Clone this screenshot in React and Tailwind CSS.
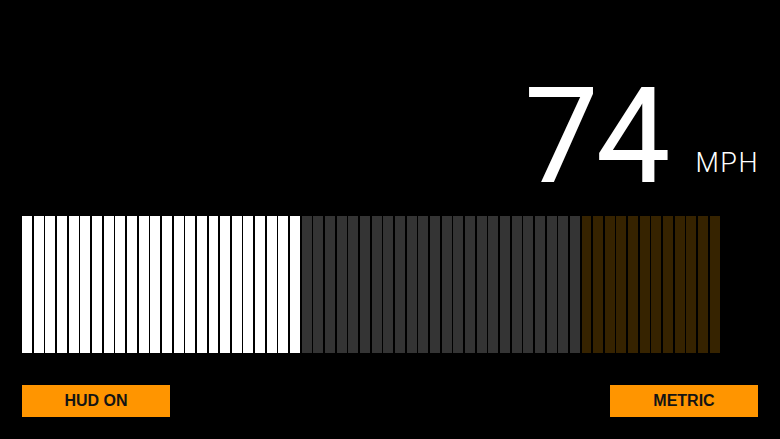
export default function App() {
  const bars = [];
  for (let i = 0; i < 60; i++) {
    let cls = "bg-white";
    if (i >= 24 && i < 48) cls = "bg-[#343434]";
    if (i >= 48) cls = "bg-[#362300]";
    bars.push(<div key={i} className={`flex-1 h-full ${cls}`} />);
  }
  return (
    <div className="w-[780px] h-[439px] bg-black flex flex-col px-[22px] overflow-hidden" style={{ fontFamily: "Roboto, 'Liberation Sans', sans-serif" }}>
      <div className="flex justify-end items-end pt-[70px]">
        <div className="text-white font-normal text-[133px] leading-none tracking-[-3px]">74</div>
        <div className="text-white font-light text-[27px] leading-none ml-[28px] mb-[26px] tracking-[1.5px] mr-[-1px]">MPH</div>
      </div>
      <div className="flex w-[698px] h-[137px] gap-[1.7px] mt-[13px]">{bars}</div>
      <div className="flex justify-between mt-[32px]" style={{ fontFamily: "'Liberation Sans', Arial, sans-serif" }}>
        <div className="w-[148px] h-[32px] bg-[#ff9500] flex items-center justify-center text-[16px] font-bold text-[#141414]">HUD ON</div>
        <div className="w-[148px] h-[32px] bg-[#ff9500] flex items-center justify-center text-[16px] font-bold text-[#141414]">METRIC</div>
      </div>
    </div>
  );
}
